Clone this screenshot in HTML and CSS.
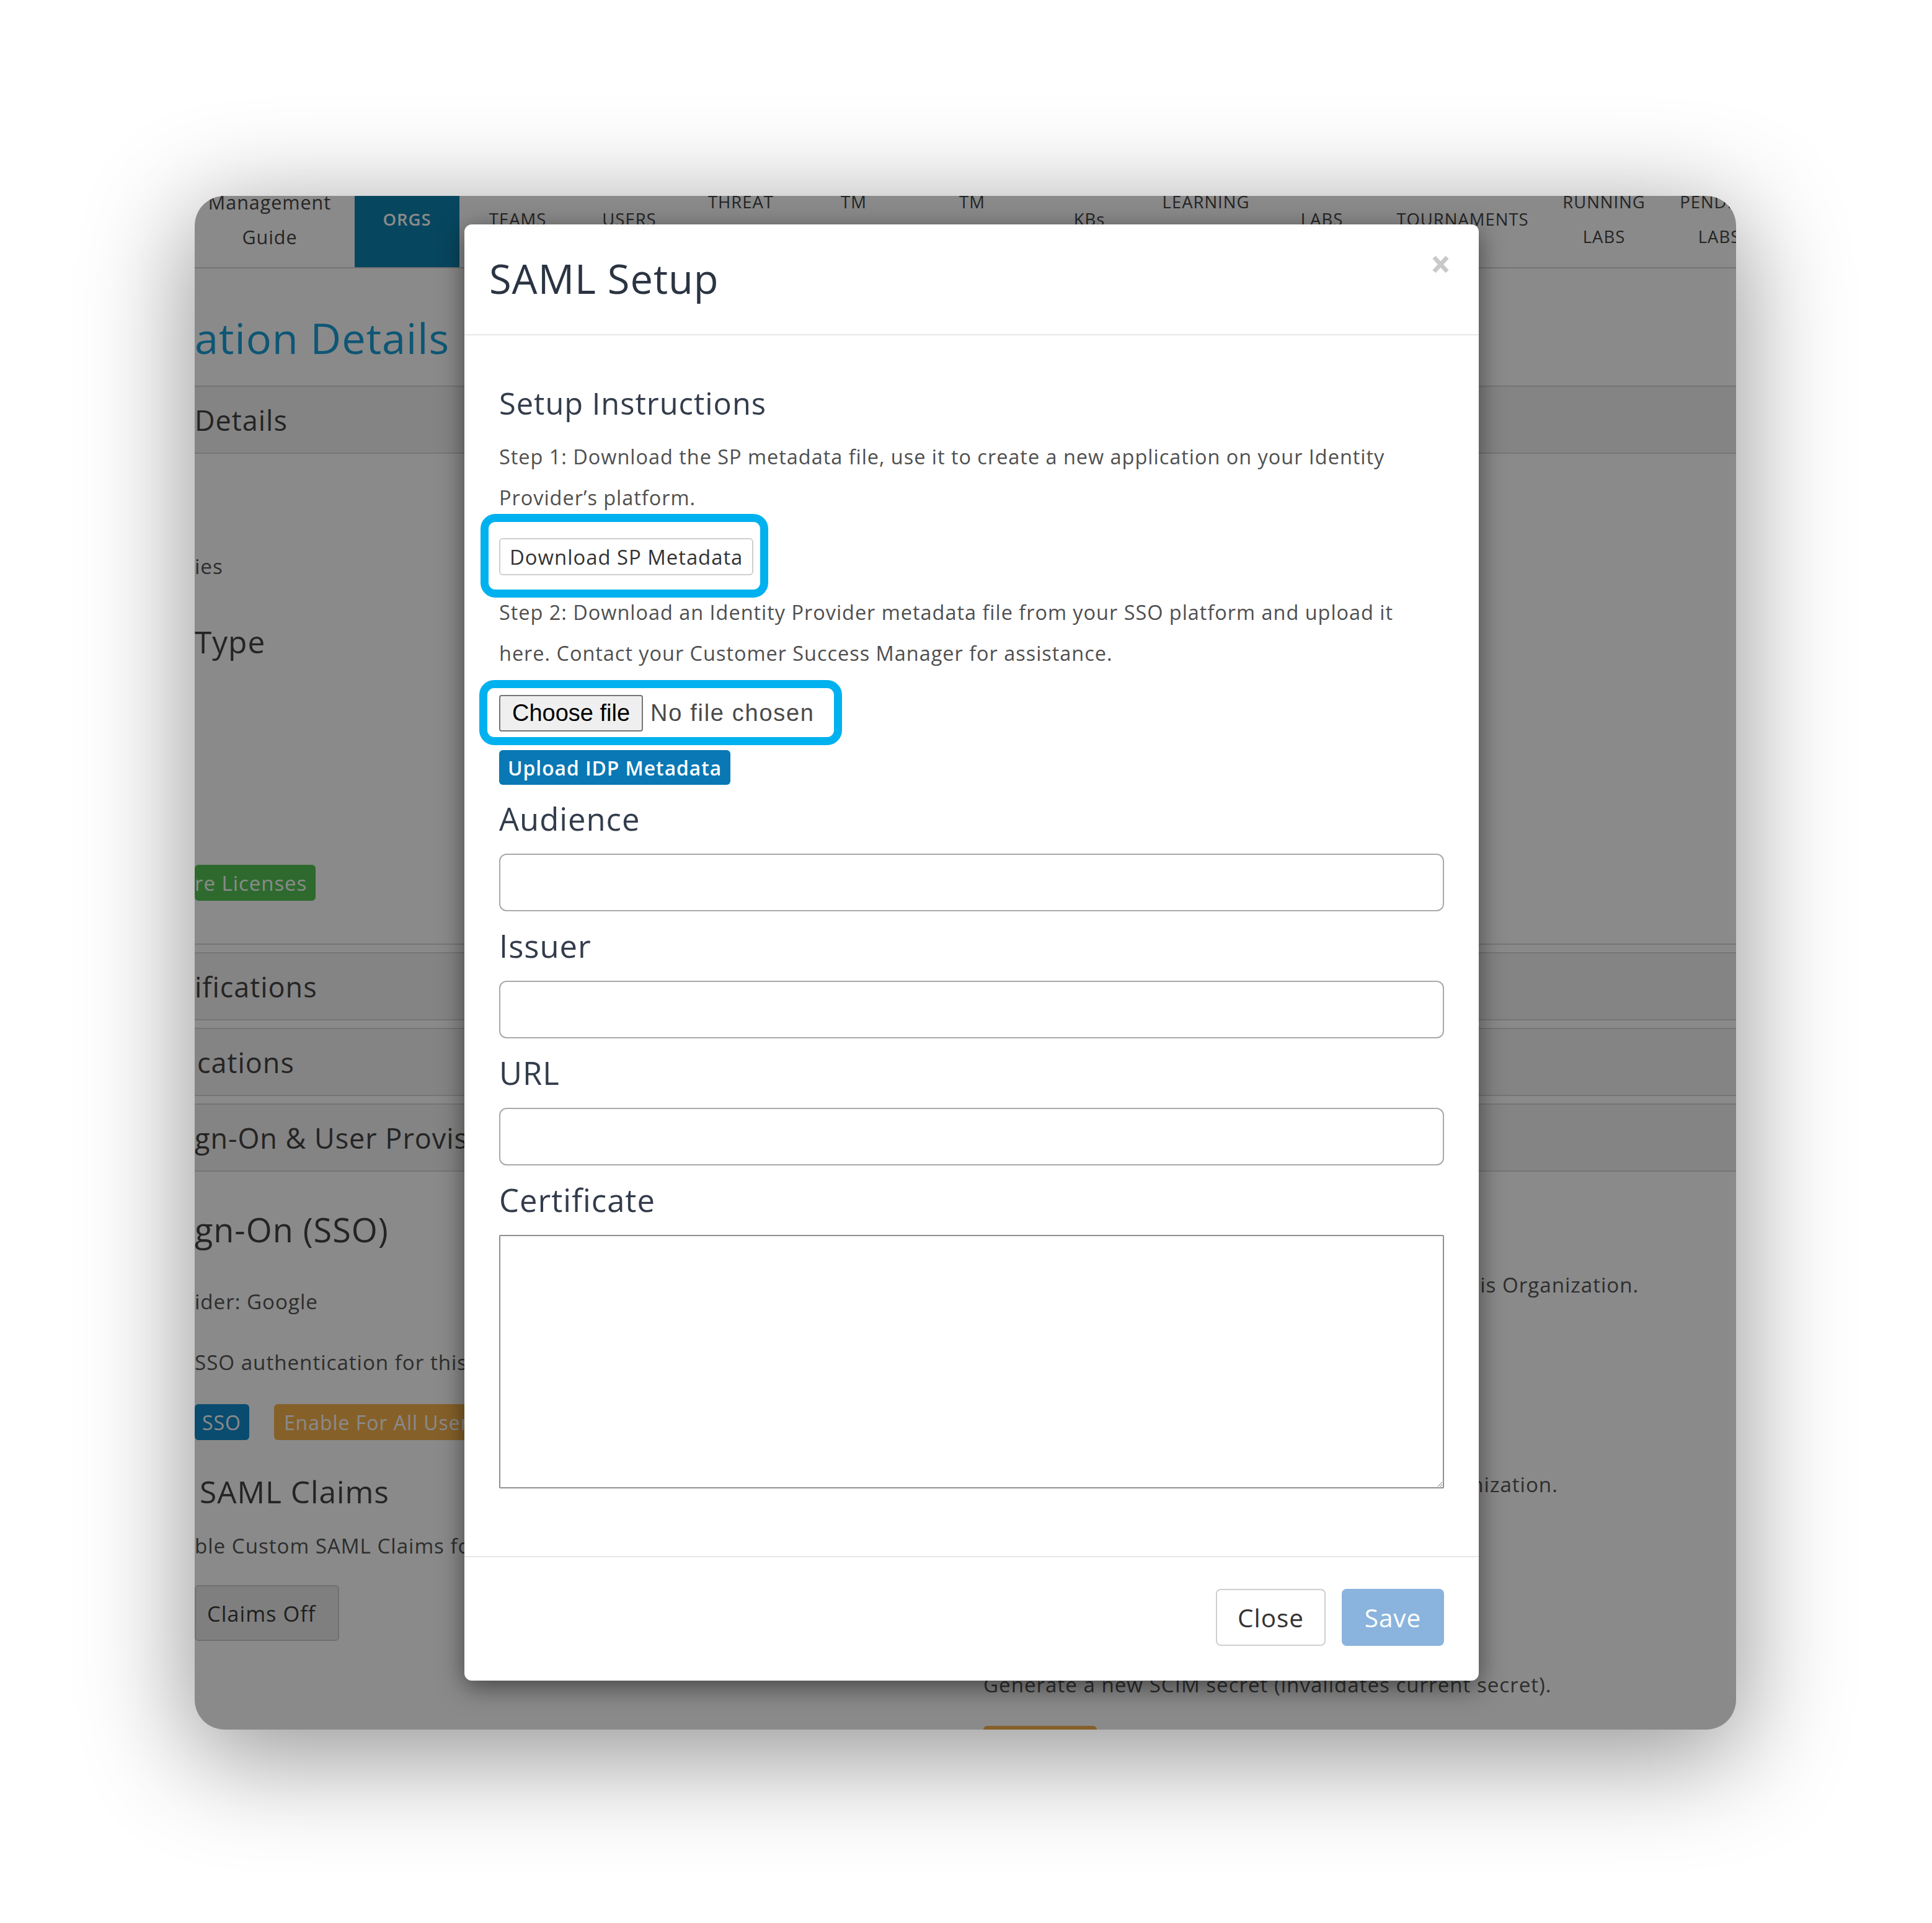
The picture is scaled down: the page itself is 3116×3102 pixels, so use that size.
FILE: index.html
```html
<!DOCTYPE html>
<html lang="en">
<head>
<meta charset="utf-8">
<title>SAML Setup</title>
<link rel="stylesheet" href="styles.css">
</head>
<body>
<div class="stage">
  <div class="window">
    <div class="app">
      <nav class="topnav">
        <div class="nav-item nav-guide"><span>Management<br>Guide</span></div>
        <div class="nav-item nav-active"><span>ORGS</span></div>
        <div class="nav-item"><span>TEAMS</span></div>
        <div class="nav-item"><span>USERS</span></div>
        <div class="nav-item"><span>THREAT<br>MODELING</span></div>
        <div class="nav-item"><span>TM<br>PROJECTS</span></div>
        <div class="nav-item"><span>TM<br>TEMPLATES</span></div>
        <div class="nav-item"><span>KBs</span></div>
        <div class="nav-item"><span>LEARNING<br>PATHS</span></div>
        <div class="nav-item"><span>LABS</span></div>
        <div class="nav-item"><span>TOURNAMENTS</span></div>
        <div class="nav-item"><span>RUNNING<br>LABS</span></div>
        <div class="nav-item"><span>PENDING<br>LABS</span></div>
      </nav>

      <h1 class="page-title">ation Details</h1>

      <section class="panel">
        <h2 class="panel-heading has-body">Details</h2>
        <div class="details-body">
          <p class="field-label">ies</p>
          <h4 class="sub-heading">Type</h4>
          <button class="bg-btn bg-btn-green">re Licenses</button>
        </div>
      </section>

      <section class="panel">
        <h2 class="panel-heading">ifications</h2>
      </section>

      <section class="panel">
        <h2 class="panel-heading heading-indent">cations</h2>
      </section>

      <section class="panel">
        <h2 class="panel-heading has-body">gn-On &amp; User Provisioning</h2>
        <div class="sso-body">
          <div class="sso-col">
            <h3 class="sso-title">gn-On (SSO)</h3>
            <p class="sso-text t-provider">ider: Google</p>
            <p class="sso-text t-auth">SSO authentication for this Organization.</p>
            <div class="btn-row">
              <button class="bg-btn bg-btn-blue">SSO</button>
              <button class="bg-btn bg-btn-orange">Enable For All Users</button>
            </div>
            <h4 class="sub-heading claims-title">SAML Claims</h4>
            <p class="sso-text t-claims">ble Custom SAML Claims for this Organization.</p>
            <button class="bg-btn bg-btn-default">Claims Off</button>
          </div>
          <div class="scim-col">
            <p class="sso-text t-scim1">Enables SCIM automated user provisioning for this Organization.</p>
            <p class="sso-text t-scim2">Require all users to log in with SSO for this Organization.</p>
            <p class="sso-text t-scim3">Generate a new SCIM secret (invalidates current secret).</p>
            <button class="bg-btn bg-btn-orange scim-btn">Regenerate</button>
          </div>
        </div>
      </section>
    </div>

    <div class="backdrop"></div>

    <div class="modal" role="dialog" aria-label="SAML Setup">
      <header class="modal-header">
        <h3 class="modal-title">SAML Setup</h3>
        <button class="modal-close" aria-label="Close">
          <svg width="29" height="31" viewBox="0 0 29 31"><path d="M4 4 L25 27 M25 4 L4 27" stroke="#c9c9c9" stroke-width="7" fill="none"/></svg>
        </button>
      </header>
      <div class="modal-body">
        <h4 class="section-title">Setup Instructions</h4>
        <p class="step">Step 1: Download the SP metadata file, use it to create a new application on your Identity Provider’s platform.</p>
        <div class="step-action">
          <span class="highlight hl-download"><button class="btn-outline">Download SP Metadata</button></span>
        </div>
        <p class="step step-2">Step 2: Download an Identity Provider metadata file from your SSO platform and upload it here. Contact your Customer Success Manager for assistance.</p>
        <div class="step-action file-action">
          <span class="highlight hl-file">
            <span class="file-input"><span class="file-btn">Choose file</span><span class="file-name">No file chosen</span></span>
          </span>
        </div>
        <button class="btn-primary">Upload IDP Metadata</button>

        <div class="form-group form-group-first">
          <label for="aud">Audience</label>
          <input id="aud" class="form-control" type="text">
        </div>
        <div class="form-group">
          <label for="iss">Issuer</label>
          <input id="iss" class="form-control" type="text">
        </div>
        <div class="form-group">
          <label for="url">URL</label>
          <input id="url" class="form-control" type="text">
        </div>
        <div class="form-group">
          <label for="cert">Certificate</label>
          <textarea id="cert" class="form-textarea"></textarea>
        </div>
      </div>
      <footer class="modal-footer">
        <button class="btn-close">Close</button>
        <button class="btn-save">Save</button>
      </footer>
    </div>
  </div>
</div>
</body>
</html>
```

FILE: styles.css
```css
* { box-sizing: border-box; }
html, body { margin: 0; padding: 0; }
body {
  background: #fff;
  font-family: "Open Sans", "Liberation Sans", Arial, sans-serif;
  letter-spacing: 0.06em;
  color: #444;
}
button, input, textarea { font: inherit; letter-spacing: inherit; color: inherit; margin: 0; }
h1, h2, h3, h4, p { margin: 0; font-weight: inherit; }

.stage { width: 3116px; height: 3102px; padding: 316px 316px 312px 314px; }
.window {
  position: relative;
  width: 2486px;
  height: 2474px;
  border-radius: 48px;
  overflow: hidden;
  background: #fff;
  box-shadow: 0 36px 170px 8px rgba(0, 0, 0, .42);
}
.app { width: 2486px; white-space: nowrap; color: #474747; }

/* top navigation */
.topnav {
  display: grid;
  grid-template-columns: 274px 169px 188px 172px 188px 176px 206px 172px 204px 170px 284px 172px 200px;
  margin-left: -16px;
  border-bottom: 2px solid #d4d4d4;
}
.nav-item {
  height: 115px;
  padding-bottom: 39px;
  display: flex;
  flex-direction: column;
  justify-content: center;
  align-items: center;
  text-align: center;
  font-size: 27.5px;
  font-weight: 500;
  line-height: 56px;
  color: #454545;
}
.nav-guide { font-size: 30.5px; font-weight: 400; }
.nav-active { background: #0d82b0; color: #fff; font-weight: 600; }

.page-title {
  margin: 72px 0 37px;
  font-size: 68.5px;
  line-height: 80px;
  font-weight: 500;
  color: #1a9fd8;
}

/* panels */
.panel { border-top: 2px solid #d8d8d8; border-bottom: 2px solid #d8d8d8; margin-bottom: 12px; }
.panel-heading {
  height: 106px;
  display: flex;
  align-items: center;
  background: #f4f4f4;
  font-size: 45px;
  font-weight: 500;
  color: #444;
}
.panel-heading.has-body { height: 108px; border-bottom: 2px solid #d8d8d8; }
.heading-indent { padding-left: 4px; }

.details-body { display: flex; flex-direction: column; align-items: flex-start; padding-bottom: 69px; }
.field-label { margin-top: 157px; font-size: 33.2px; line-height: 50px; color: #555; }
.sub-heading { font-size: 49.6px; font-weight: 500; line-height: 70px; color: #444; }
.details-body .sub-heading { margin-top: 61px; }

.bg-btn {
  height: 58px;
  border: 0;
  border-radius: 6px;
  font-size: 32px;
  font-weight: 500;
  color: #fff;
  padding: 0 16px;
}
.bg-btn-green { margin-top: 325px; background: #56c556; padding: 0 14px 0 0; font-size: 33px; }
.bg-btn-blue { background: #148dcd; padding: 0 13px 0 12px; }
.bg-btn-orange { background: #f7b24d; }
.bg-btn-default {
  margin-top: 38px;
  height: 90px;
  background: #ebebeb;
  border: 2px solid #cfcfcf;
  color: #3a3a3a;
  font-size: 34.5px;
  font-weight: 400;
  padding: 0 36px 0 18px;
}

.sso-body { display: grid; grid-template-columns: 1272px 1fr; align-items: start; }
.sso-col, .scim-col { display: flex; flex-direction: column; align-items: flex-start; }
.sso-title { margin-top: 53px; font-size: 54px; line-height: 80px; font-weight: 400; color: #444; }
.sso-text { font-size: 33.2px; line-height: 50px; color: #555; }
.t-provider { margin-top: 52px; }
.t-auth { margin-top: 48px; }
.btn-row { margin-top: 42px; display: flex; gap: 40px; }
.claims-title { margin-top: 48px; padding-left: 8px; }
.t-claims { margin-top: 28px; }
.t-scim1 { margin-top: 158px; }
.t-scim2 { margin-top: 272px; }
.t-scim3 { margin-top: 273px; }
.scim-btn { margin-top: 41px; width: 183px; }

.backdrop { position: absolute; inset: 0; background: rgba(0, 0, 0, .46); }

/* modal */
.modal {
  position: absolute;
  left: 435px;
  top: 46px;
  width: 1636px;
  background: #fff;
  border-radius: 12px;
  box-shadow: 0 10px 40px rgba(0, 0, 0, .5);
  white-space: normal;
  color: #333;
}
.modal-header {
  height: 179px;
  border-bottom: 2px solid #e6e6e6;
  display: flex;
  justify-content: space-between;
  align-items: flex-start;
  padding: 49px 47px 0 40px;
}
.modal-title { font-size: 65px; font-weight: 500; line-height: 76px; color: #2b3442; }
.modal-close { width: 29px; height: 31px; padding: 0; border: 0; background: none; }
.modal-close svg { display: block; }

.modal-body {
  padding: 78px 56px 109px;
  display: flex;
  flex-direction: column;
  align-items: flex-start;
}
.section-title { font-size: 48.8px; font-weight: 500; line-height: 62px; color: #333c4b; }
.step { margin-top: 23px; font-size: 32.5px; line-height: 66px; color: #4f4f4f; max-width: 1490px; }
.step-2 { margin-top: 27px; }
.step-action { margin-top: 32px; display: flex; }
.file-action { margin-top: 34px; }

.highlight { position: relative; display: inline-flex; }
.highlight::after {
  content: "";
  position: absolute;
  border: 13px solid #00b1ef;
  border-radius: 24px;
}
.hl-download::after { inset: -39px -24px -36px -30px; }
.hl-file::after { inset: -24px -44px -22px -32px; }

.btn-outline {
  height: 60px;
  padding: 0 15px;
  background: #fff;
  border: 2px solid #cfcfcf;
  border-radius: 6px;
  font-size: 32.9px;
  color: #333;
}
.file-input {
  display: flex;
  align-items: center;
  height: 59px;
  font-family: "Liberation Sans", Arial, sans-serif;
  letter-spacing: 0;
}
.file-btn {
  height: 59px;
  width: 232px;
  display: flex;
  align-items: center;
  justify-content: center;
  background: #efefef;
  border: 2px solid #767676;
  border-radius: 4px;
  font-size: 38px;
  color: #000;
}
.file-name { margin-left: 12px; font-size: 38px; letter-spacing: 1.7px; color: #4a4a4a; }

.btn-primary {
  margin-top: 30px;
  height: 56px;
  padding: 0 14px;
  background: #0a78b5;
  border: 0;
  border-radius: 6px;
  color: #fff;
  font-size: 31.8px;
  font-weight: 600;
}

.form-group { align-self: stretch; display: flex; flex-direction: column; margin-top: 28px; }
.form-group-first { margin-top: 27px; }
.form-group label {
  font-size: 50.8px;
  font-weight: 500;
  line-height: 56px;
  color: #333c4b;
  margin-bottom: 28px;
}
.form-control {
  width: 100%;
  height: 93px;
  border: 2px solid #a9a9a9;
  border-radius: 12px;
  background: #fff;
}
.form-textarea {
  display: block;
  width: 100%;
  height: 409px;
  border: 2px solid #8f8f8f;
  border-radius: 2px;
  resize: vertical;
}

.modal-footer {
  border-top: 2px solid #e6e6e6;
  padding: 51px 56px 56px;
  display: flex;
  justify-content: flex-end;
  gap: 26px;
}
.btn-close {
  height: 92px;
  width: 177px;
  background: #fff;
  border: 2px solid #cfcfcf;
  border-radius: 8px;
  font-size: 40.5px;
  color: #333;
}
.btn-save {
  height: 92px;
  width: 165px;
  background: #8ab4dd;
  border: 0;
  border-radius: 8px;
  font-size: 40.5px;
  font-weight: 500;
  color: #fff;
}
```
